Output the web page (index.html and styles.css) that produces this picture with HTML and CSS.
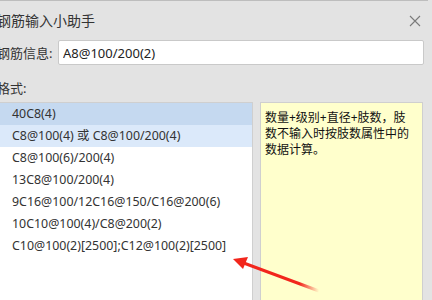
FILE: index.html
```html
<!DOCTYPE html>
<html lang="zh-CN">
<head>
    <meta charset="UTF-8">
    <title>钢筋输入小助手</title>
    <link rel="stylesheet" href="styles.css">
</head>
<body>

    <div class="dialog">
        <div class="titlebar">
            <span class="title">钢筋输入小助手</span>
            <span class="close">
                <svg width="12" height="12" viewBox="0 0 12 12"><path d="M1 1 L11 11 M11 1 L1 11" stroke="#7a7a7a" stroke-width="1.1" fill="none"/></svg>
            </span>
        </div>

        <div class="info-row">
            <label class="label" for="rebar">钢筋信息:</label>
            <input type="text" id="rebar" class="rebar-input" value="A8@100/200(2)">
        </div>

        <div class="format-label">格式:</div>

        <div class="main">
            <ul class="format-list">
                <li class="selected">40C8(4)</li>
                <li class="hover">C8@100(4) 或 C8@100/200(4)</li>
                <li>C8@100(6)/200(4)</li>
                <li>13C8@100/200(4)</li>
                <li>9C16@100/12C16@150/C16@200(6)</li>
                <li>10C10@100(4)/C8@200(2)</li>
                <li>C10@100(2)[2500];C12@100(2)[2500]</li>
            </ul>
            <div class="note">数量+级别+直径+肢数，肢数不输入时按肢数属性中的数据计算。</div>
        </div>
    </div>

    <!-- red annotation arrow -->
    <svg class="arrow" width="100" height="50" viewBox="0 0 100 50">
        <defs>
            <linearGradient id="fade" x1="0" y1="0" x2="1" y2="0">
                <stop offset="0" stop-color="#f2261c"/>
                <stop offset="0.75" stop-color="#f2261c"/>
                <stop offset="1" stop-color="#f2261c" stop-opacity="0"/>
            </linearGradient>
        </defs>
        <path d="M8 4 L86 33" stroke="url(#fade)" stroke-width="3" fill="none"/>
        <path d="M0 1 L15 -1 L10 11 Z" fill="#f2261c"/>
    </svg>

</body>
</html>
```

FILE: styles.css
```css
* {
    margin: 0;
    padding: 0;
    box-sizing: border-box;
}

body {
    font-family: "Noto Sans", "Noto Sans CJK SC", sans-serif;
    background: #e3e3e3;
    color: #222;
    width: 432px;
    height: 300px;
    overflow: hidden;
    position: relative;
}

.dialog {
    margin-left: -3px;
    width: 431px;
    height: 300px;
    border-top: 1px solid #bdbdbd;
    display: flex;
    flex-direction: column;
}

.titlebar {
    height: 39px;
    display: flex;
    align-items: center;
    justify-content: space-between;
    padding-right: 7px;
    padding-bottom: 1px;
}

.title {
    font-size: 14px;
    color: #333;
}

.close {
    display: flex;
    margin-top: 1px;
}

.info-row {
    display: flex;
    align-items: center;
    height: 25px;
    padding-right: 4px;
}

.label {
    font-size: 13px;
    color: #333;
    width: 61px;
}

.rebar-input {
    flex: 1;
    height: 25px;
    border: 1px solid #c9c9c9;
    border-radius: 2px;
    padding: 0 4px;
    font-family: inherit;
    font-size: 13px;
    color: #222;
    background: #fff;
    outline: none;
}

.format-label {
    font-size: 13px;
    line-height: 17px;
    color: #333;
    padding-top: 15px;
    margin-bottom: 5px;
}

.main {
    flex: 1;
    display: flex;
    gap: 7px;
    padding-right: 5px;
}

.format-list {
    list-style: none;
    width: 262px;
    margin-left: -6px;
    background: #fff;
    border: 1px solid #cfcfcf;
    border-bottom: none;
}

.format-list li {
    height: 22px;
    line-height: 22px;
    padding-left: 20px;
    font-size: 12.4px;
    color: #333;
    white-space: nowrap;
}

.format-list li.selected {
    background: #c5d9f0;
}

.format-list li.hover {
    background: #dbe9fa;
}

.note {
    flex: 1;
    background: #ffffcc;
    border: 1px solid #cfcfcf;
    border-bottom: none;
    padding: 7px 12px 3px 4px;
    font-size: 12px;
    line-height: 16px;
    color: #111;
}

.arrow {
    position: absolute;
    left: 233px;
    top: 258px;
    overflow: visible;
}
```
